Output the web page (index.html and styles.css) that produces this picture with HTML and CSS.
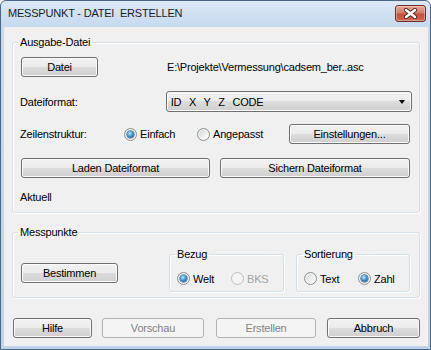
FILE: index.html
```html
<!DOCTYPE html>
<html lang="de">
<head>
    <meta charset="UTF-8" />
    <title>Messpunkt - Datei erstellen</title>
    <link rel="stylesheet" href="styles.css">
</head>
<body>
    <div class="window">
        <div class="titlebar">
            <span class="title">MESSPUNKT - DATEI  ERSTELLEN</span>
            <div class="close">
                <svg width="15" height="11" viewBox="0 0 15 11">
                    <path d="M3 2 L12 9 M12 2 L3 9" stroke="#4a2a28" stroke-width="4.2" stroke-linecap="round"/>
                    <path d="M3 2 L12 9 M12 2 L3 9" stroke="#fff" stroke-width="2.4" stroke-linecap="round"/>
                </svg>
            </div>
        </div>

        <div class="client">
            <fieldset class="group">
                <legend>Ausgabe-Datei</legend>
                <div class="row row-file">
                    <button class="btn btn-datei">Datei</button>
                    <span class="path">E:\Projekte\Vermessung\cadsem_ber..asc</span>
                </div>
                <div class="row row-format">
                    <span class="label label-format">Dateiformat:</span>
                    <div class="combo">
                        <span class="combo-text">ID  X  Y  Z  CODE</span>
                        <span class="arrow"></span>
                    </div>
                </div>
                <div class="row row-lines">
                    <span class="label label-lines">Zeilenstruktur:</span>
                    <label class="opt opt-einfach"><span class="radio checked"></span>Einfach</label>
                    <label class="opt opt-angepasst"><span class="radio"></span>Angepasst</label>
                    <button class="btn btn-settings">Einstellungen...</button>
                </div>
                <div class="row row-load">
                    <button class="btn btn-load">Laden Dateiformat</button>
                    <button class="btn btn-save">Sichern Dateiformat</button>
                </div>
                <div class="row row-current">
                    <span class="label">Aktuell</span>
                </div>
            </fieldset>

            <fieldset class="group group-points">
                <legend>Messpunkte</legend>
                <div class="points">
                    <button class="btn btn-bestimmen">Bestimmen</button>
                    <fieldset class="subgroup sub-bezug">
                        <legend>Bezug</legend>
                        <div class="sub-row">
                            <label class="opt opt-welt"><span class="radio checked"></span>Welt</label>
                            <label class="opt disabled"><span class="radio"></span>BKS</label>
                        </div>
                    </fieldset>
                    <fieldset class="subgroup sub-sort">
                        <legend>Sortierung</legend>
                        <div class="sub-row">
                            <label class="opt opt-text"><span class="radio"></span>Text</label>
                            <label class="opt"><span class="radio checked"></span>Zahl</label>
                        </div>
                    </fieldset>
                </div>
            </fieldset>

            <div class="actions">
                <button class="btn btn-hilfe">Hilfe</button>
                <button class="btn btn-vorschau" disabled>Vorschau</button>
                <button class="btn btn-erstellen" disabled>Erstellen</button>
                <button class="btn btn-abbruch">Abbruch</button>
            </div>
        </div>
    </div>
</body>
</html>
```

FILE: styles.css
```css
* {
    box-sizing: border-box;
}
body {
    margin: 0;
    font-family: "Liberation Sans", Arial, sans-serif;
    font-size: 11px;
    letter-spacing: -0.2px;
    color: #000;
    background-color: #fff;
}
.window {
    width: 431px;
    height: 350px;
    border: 1px solid #4b6787;
    border-radius: 6px 6px 0 0;
    background: linear-gradient(#dce8f5, #c6d9ee 26px, #bfd4ec);
    display: flex;
    flex-direction: column;
}
.titlebar {
    height: 26px;
    display: flex;
    align-items: flex-start;
    padding-left: 7px;
}
.title {
    margin-top: 6px;
    font-size: 11px;
    letter-spacing: -0.2px;
    white-space: pre;
    color: #1b1b1b;
}
.close {
    margin-left: auto;
    margin-right: 4px;
    margin-top: 4px;
    width: 31px;
    height: 17px;
    border: 1px solid #6b2d2a;
    border-radius: 3px;
    background: linear-gradient(#e8a796, #d77a69 45%, #c5503d 55%, #d0674f);
    box-shadow: inset 0 0 0 1px rgba(255, 255, 255, 0.35);
    display: flex;
    align-items: center;
    justify-content: center;
}
.client {
    flex: 1;
    margin: 0 2px 3px 3px;
    padding: 9px 8px 0 8px;
    background-color: #f0f0f0;
}

/* group boxes */
.group {
    margin: 0;
    padding: 0 7px 8px 8px;
    border: 1px solid #d5dfe5;
    border-radius: 3px;
    box-shadow: inset 1px 1px 0 #fff, 1px 1px 0 #fff;
    min-width: 0;
}
.group > legend {
    margin-left: -3px;
    padding: 0 2px;
    line-height: 13px;
}
.group-points {
    margin-top: 13px;
    padding-bottom: 5px;
}
.row {
    display: flex;
    align-items: center;
}
.row-file {
    margin-top: 8px;
    height: 20px;
}
.row-format {
    margin-top: 14px;
    height: 21px;
}
.row-lines {
    margin-top: 12px;
    height: 20px;
}
.row-load {
    margin-top: 14px;
    height: 20px;
    gap: 10px;
}
.row-current {
    margin-top: 12px;
    height: 14px;
}
.label {
    margin-left: -1px;
}
.label-format {
    width: 146px;
}
.label-lines {
    width: 104px;
}
.path {
    margin-left: 69px;
}

/* buttons */
.btn {
    height: 20px;
    padding: 0;
    font: inherit;
    letter-spacing: inherit;
    color: #000;
    border: 1px solid #707070;
    border-radius: 3px;
    background: linear-gradient(#f2f2f2, #ebebeb 50%, #dddddd 50%, #cfcfcf);
    box-shadow: inset 0 0 0 1px #fbfbfb;
}
.btn:disabled {
    color: #838383;
    border-color: #adb2b5;
    background: #f4f4f4;
    box-shadow: none;
}
.btn-datei { width: 77px; }
.btn-settings { width: 121px; }
.btn-load { width: 189px; }
.btn-save { width: 190px; }
.btn-bestimmen { width: 97px; margin-top: 24px; }

/* combo box */
.combo {
    width: 247px;
    height: 21px;
    display: flex;
    align-items: center;
    padding-left: 4px;
    border: 1px solid #707070;
    border-radius: 3px;
    background: linear-gradient(#f2f2f2, #ebebeb 50%, #dddddd 50%, #cfcfcf);
    box-shadow: inset 0 0 0 1px #fbfbfb;
}
.combo-text {
    white-space: pre;
    word-spacing: 1px;
}
.arrow {
    margin-left: auto;
    margin-right: 6px;
    width: 0;
    height: 0;
    border-left: 3.5px solid transparent;
    border-right: 3.5px solid transparent;
    border-top: 4px solid #000;
}

/* radio buttons */
.opt {
    display: flex;
    align-items: center;
    gap: 3px;
}
.opt-einfach { width: 73px; }
.opt-angepasst { width: 92px; }
.opt-welt { width: 54px; }
.opt-text { width: 54px; }
.radio {
    position: relative;
    width: 13px;
    height: 13px;
    border-radius: 50%;
    border: 1px solid #8e8f8f;
    background: linear-gradient(135deg, #d0d2d4, #f6f6f6 70%, #ffffff);
    box-shadow: inset 0 0 0 1px #f4f4f4;
}
.radio.checked::after {
    content: "";
    position: absolute;
    left: 2px;
    top: 2px;
    width: 7px;
    height: 7px;
    border-radius: 50%;
    background: radial-gradient(circle at 40% 35%, #c6ecff, #3e94d6 45%, #17508f);
    box-shadow: 0 0 0 0.5px #1d4f7e;
}
.opt.disabled {
    color: #a3a3a3;
}
.opt.disabled .radio {
    border-color: #c0c0c0;
    background: #f4f4f4;
    box-shadow: none;
}

/* nested groups */
.points {
    display: flex;
    align-items: flex-start;
}
.subgroup {
    margin: 9px 0 0 0;
    padding: 0 6px 6px 7px;
    height: 44px;
    border: 1px solid #d5dfe5;
    border-radius: 3px;
    box-shadow: inset 1px 1px 0 #fff, 1px 1px 0 #fff;
    min-width: 0;
}
.subgroup > legend {
    margin-left: -2px;
    padding: 0 2px;
    line-height: 13px;
}
.sub-bezug {
    width: 115px;
    margin-left: 51px;
}
.sub-sort {
    width: 114px;
    margin-left: 12px;
}
.sub-row {
    display: flex;
    margin-top: 11px;
}

/* dialog buttons */
.actions {
    display: flex;
    margin-top: 20px;
    margin-left: 1px;
}
.btn-hilfe { width: 79px; }
.btn-vorschau { width: 102px; margin-left: 10px; }
.btn-erstellen { width: 100px; margin-left: 12px; }
.btn-abbruch { width: 93px; margin-left: 11px; }
```
